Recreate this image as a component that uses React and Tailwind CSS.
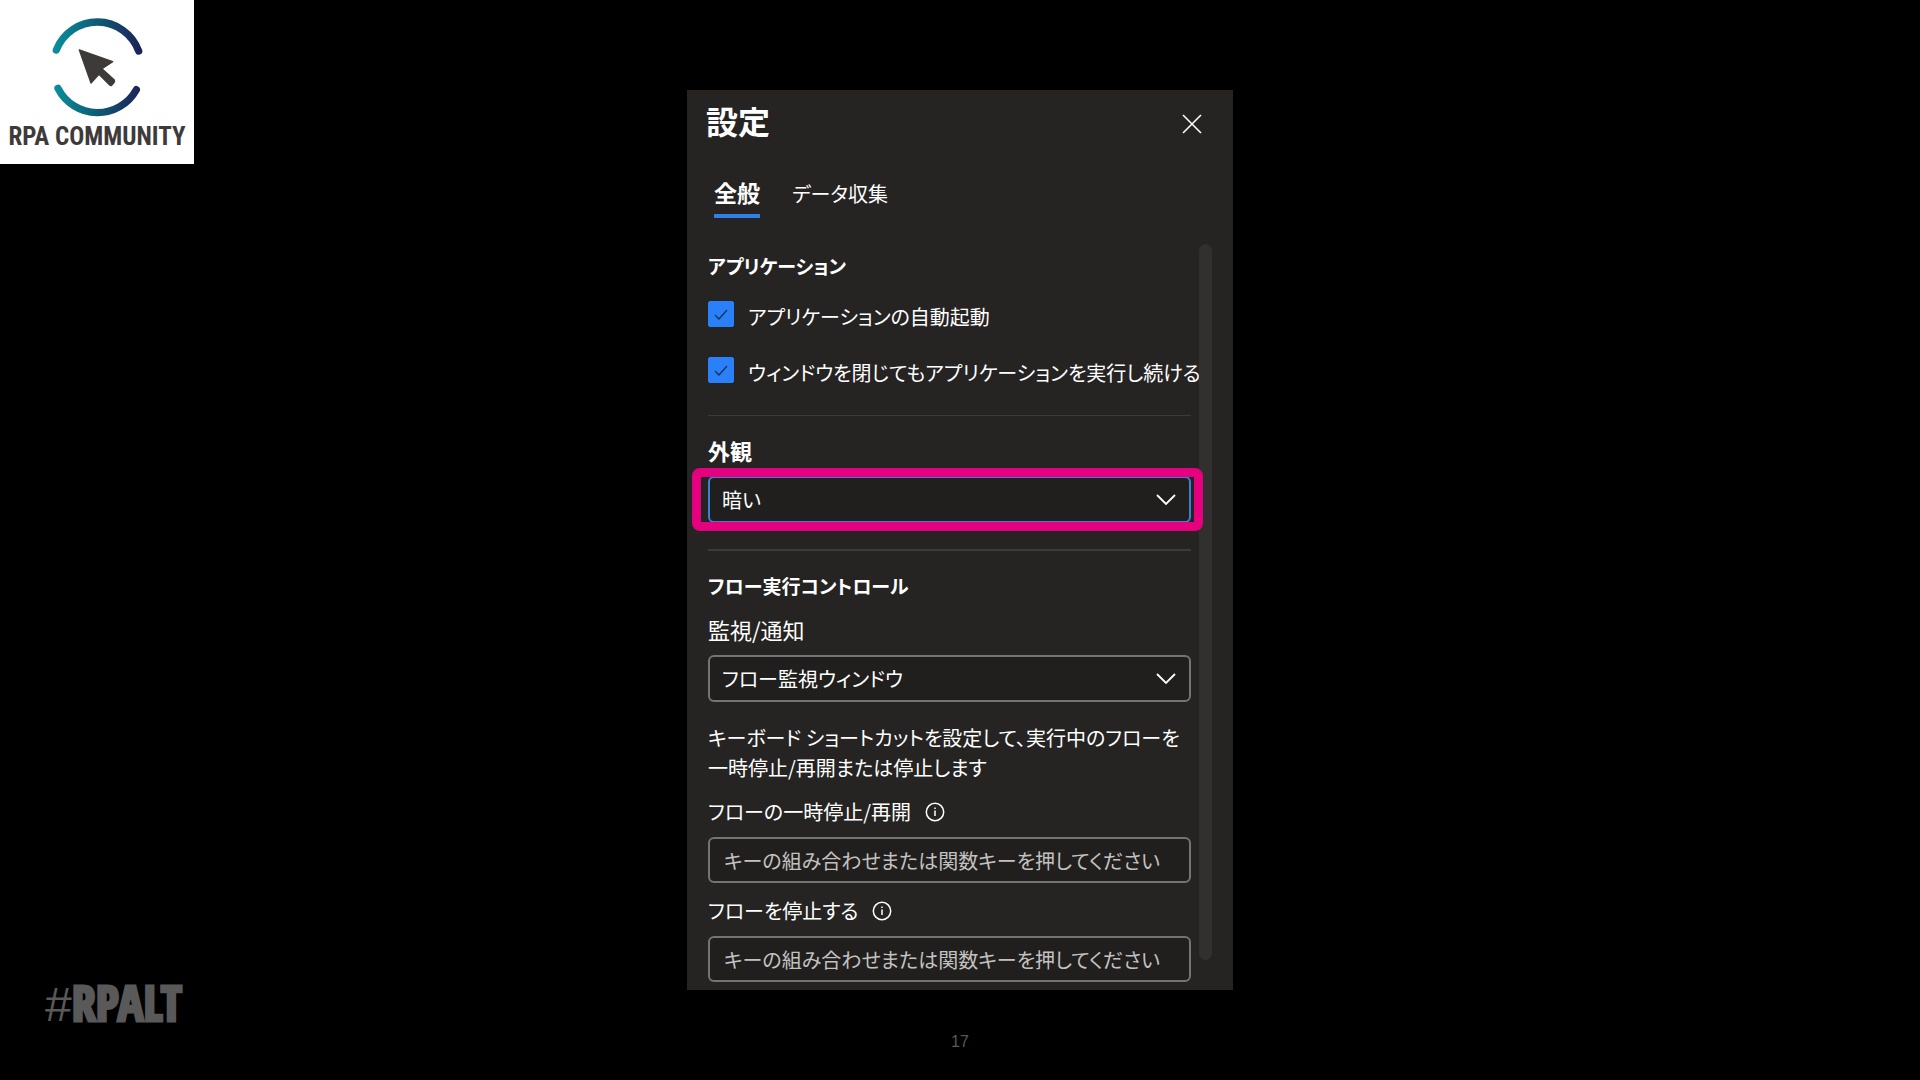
import { useState } from 'react'

const TABS = [
  { key: 'general', label: '全般', size: 'text-[23px]' },
  { key: 'data', label: 'データ収集', size: 'text-[20px]' },
]

const KEY_PLACEHOLDER = 'キーの組み合わせまたは関数キーを押してください'

function Logo() {
  return (
    <div className="flex h-[164px] w-[194px] flex-col items-center bg-white">
      <svg viewBox="150 50 285 300" className="mt-[17px] h-[100px] w-[95px] shrink-0" aria-hidden="true">
        <defs>
          <linearGradient id="ring" gradientUnits="userSpaceOnUse" x1="160" y1="0" x2="424" y2="0">
            <stop offset="0" stopColor="#0b8f9c" />
            <stop offset="0.45" stopColor="#0d6078" />
            <stop offset="1" stopColor="#1d2158" />
          </linearGradient>
        </defs>
        <path d="M169 149A132 132 0 0 1 416 152" fill="none" stroke="url(#ring)" strokeWidth="22" strokeLinecap="round" />
        <path d="M174 264A133 133 0 0 0 409 268" fill="none" stroke="url(#ring)" strokeWidth="22" strokeLinecap="round" />
        <path
          d="M238 149L338 184L306 205L343 239Q345 243 342 247L335 255Q332 257 329 254L297 222L273 248Z"
          fill="#3e3a39" stroke="#3e3a39" strokeWidth="4" strokeLinejoin="round"
        />
      </svg>
      <span className="mt-1 whitespace-nowrap font-['Roboto_Condensed','Liberation_Sans_Narrow',sans-serif] text-[25px] leading-8 font-bold text-[#3e3a39]">
        RPA COMMUNITY
      </span>
    </div>
  )
}

function CheckRow({ id, label }) {
  const [checked, setChecked] = useState(true)
  return (
    <div className="flex items-start gap-3.5">
      <span className="relative flex h-[26px] w-[26px] shrink-0">
        <input
          id={id}
          type="checkbox"
          checked={checked}
          onChange={e => setChecked(e.target.checked)}
          className="h-full w-full appearance-none rounded-[2px] border border-[#2a80f8] checked:bg-[#2a80f8]"
        />
        {checked && (
          <svg viewBox="0 0 26 26" className="pointer-events-none absolute inset-0" aria-hidden="true">
            <path d="M7 14L11 18L19 9" fill="none" stroke="#14305c" strokeWidth="1.3" />
          </svg>
        )}
      </span>
      <label htmlFor={id} className="whitespace-nowrap leading-8">{label}</label>
    </div>
  )
}

function SelectBox({ id, options, border, children }) {
  return (
    <div className="relative">
      <select
        id={id}
        className={`block h-[47px] w-full appearance-none rounded-md border-2 bg-[#201f1e] px-3 leading-[30px] text-white outline-none ${border}`}
      >
        {options.map(o => <option key={o}>{o}</option>)}
      </select>
      <svg viewBox="0 0 20 12" className="pointer-events-none absolute top-[18px] right-[15px] h-3 w-5" aria-hidden="true">
        <path d="M1 1L10 10L19 1" fill="none" stroke="#fff" strokeWidth="1.8" />
      </svg>
      {children}
    </div>
  )
}

function KeyField({ id, label }) {
  return (
    <div className="flex flex-col gap-2.5">
      <div className="flex items-center gap-3.5">
        <label htmlFor={id} className="leading-[30px]">{label}</label>
        <svg viewBox="0 0 20 20" className="h-5 w-5" fill="none" stroke="#fff" strokeWidth="1.5" aria-hidden="true">
          <circle cx="10" cy="10" r="8.7" />
          <path d="M10 8.5V14M10 5.5V7" />
        </svg>
      </div>
      <input
        id={id}
        type="text"
        placeholder={KEY_PLACEHOLDER}
        className="h-[46px] w-full rounded-md border-2 border-[#767472] bg-[#201f1e] px-3.5 text-white outline-none placeholder:text-[#c4c2c0]"
      />
    </div>
  )
}

export default function App() {
  const [tab, setTab] = useState('general')

  return (
    <div className="grid min-h-screen grid-cols-[1fr_546px_1fr] bg-black font-['Noto_Sans_CJK_JP',sans-serif]">
      <aside className="flex flex-col justify-between">
        <Logo />
        <p className="mb-[45px] ml-[45px] flex items-baseline whitespace-nowrap text-[#595959]">
          <span className="font-['Liberation_Sans',sans-serif] text-[48px] leading-[60px]">#</span>
          <span className="font-[Impact,'Noto_Sans_ExtraCondensed','Open_Sans_Condensed','Roboto_Condensed','Liberation_Sans_Narrow',sans-serif] text-[48px] leading-[60px] font-black [-webkit-text-stroke:3px_#595959]">RPALT</span>
        </p>
      </aside>

      <main className="flex flex-col pt-[90px]">
        <section className="flex flex-col bg-[#252423] pb-2 pl-[21px] text-[20px] text-white [font-feature-settings:'palt']">
          <header className="-ml-0.5 flex items-end justify-between pt-2.5 pr-[31px]">
            <h1 className="text-[32px] leading-10 font-bold">設定</h1>
            <button type="button" aria-label="閉じる" className="mb-1.5 h-5 w-5">
              <svg viewBox="0 0 20 20" className="h-5 w-5" aria-hidden="true">
                <path d="M1 1L19 19M19 1L1 19" stroke="#fff" strokeWidth="1.6" />
              </svg>
            </button>
          </header>

          <nav className="mt-9 flex items-baseline gap-8 pl-1.5">
            {TABS.map(t => (
              <button
                key={t.key}
                type="button"
                onClick={() => setTab(t.key)}
                className={`border-b-4 pb-1.5 leading-8 ${t.size} ${
                  tab === t.key ? 'border-[#2f7fe8] font-bold' : 'border-transparent'
                }`}
              >
                {t.label}
              </button>
            ))}
          </nav>

          <div className="mt-6 flex justify-between pr-[21px]">
            <div className="flex w-[483px] flex-col pt-[7px]">
              <h2 className="text-[19px] leading-[30px] font-bold">アプリケーション</h2>
              <div className="mt-5 flex flex-col gap-6">
                <CheckRow id="autostart" label="アプリケーションの自動起動" />
                <CheckRow id="keep" label="ウィンドウを閉じてもアプリケーションを実行し続ける" />
              </div>
              <hr className="mt-[26px] border-[#3d3b39]" />

              <label htmlFor="theme" className="mt-5 text-[22px] leading-7 font-bold">外観</label>
              <div className="mt-3">
                <SelectBox id="theme" options={['暗い', '明るい']} border="border-[#3f7fd8]">
                  {/* highlight frame */}
                  <div className="pointer-events-none absolute -top-2 -right-3 -bottom-2 -left-4 rounded-lg border-[9px] border-[#e4007f]" />
                </SelectBox>
              </div>
              <hr className="mt-[26px] border-t-2 border-[#3d3b39]" />

              <h2 className="mt-5 text-[19px] leading-[30px] font-bold">フロー実行コントロール</h2>
              <label htmlFor="monitor" className="mt-3.5 text-[22px] leading-7">監視/通知</label>
              <div className="mt-3">
                <SelectBox id="monitor" options={['フロー監視ウィンドウ', 'Windows 通知']} border="border-[#767472]" />
              </div>
              <p className="mt-[21px] leading-[30px]">
                キーボード ショートカットを設定して、実行中のフローを<br />一時停止/再開または停止します
              </p>
              <div className="mt-3.5 flex flex-col gap-[13px]">
                <KeyField id="pause" label="フローの一時停止/再開" />
                <KeyField id="stop" label="フローを停止する" />
              </div>
            </div>
            <div className="mb-[22px] w-[13px] rounded-full bg-[#31302e]" />
          </div>
        </section>
        <footer className="mt-10 text-center font-['Liberation_Sans',sans-serif] text-[16px] leading-6 text-[#595959]">17</footer>
      </main>
    </div>
  )
}
